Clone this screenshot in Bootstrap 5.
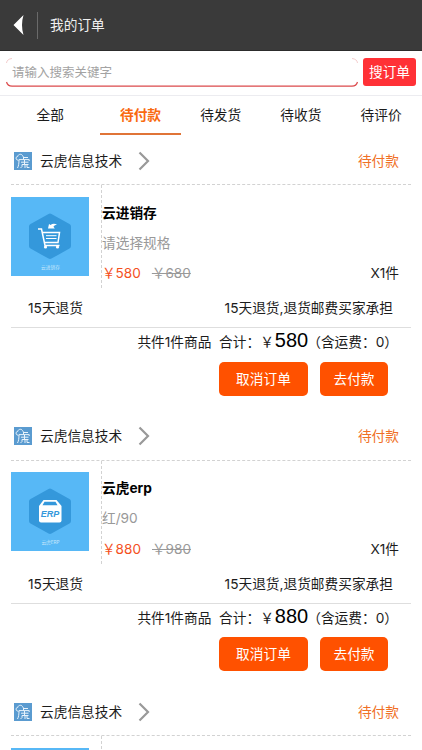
<!DOCTYPE html>
<html lang="zh-CN">
<head>
<meta charset="utf-8">
<meta name="viewport" content="width=device-width, initial-scale=1">
<title>我的订单</title>
<link href="https://cdn.jsdelivr.net/npm/bootstrap@5.3.0/dist/css/bootstrap.min.css" rel="stylesheet">
<style>
body{font-family:Inter,"Noto Sans CJK SC",sans-serif;font-size:13.7px;line-height:20px;color:#1c1c1c;background:#fff;height:750px;overflow:hidden}
svg{display:block;flex:none}
.topbar{height:51px;background:#3a3a3a;border-bottom:1px solid #2c2c2c;color:#f0f0f0;padding-left:13px}
.topbar .divider{width:1px;height:27px;background:#6a6a6a;margin:0 12px 0 13px}
.searchbar{height:45px;padding:7px 6px 8px;border-bottom:1px solid #ececf0}
.search-box{width:352px;height:29px}
.search-input{width:100%;height:29px;font-size:12.5px;padding:0 6px 1px;border:0;background:transparent}
.search-input::placeholder{color:#a3a3a3;opacity:1}
.search-btn{width:53px;height:28px;margin-left:5px;background:#ff3136;color:#fff;border-radius:3px;font-size:13.7px;line-height:29px}
.tabs{height:41px;padding-left:10px}
.tabs a{width:80.2px;height:39px;line-height:39px;color:#1c1c1c;border-bottom:2px solid transparent}
.tabs a:first-child{width:90.4px;padding-right:10px}
.tabs a.active{color:#f96a10;font-weight:700;border-color:#e07437}
.order{height:275.5px;padding:0 11px}
.shop{height:48px;padding:0 12px 0 3px;border-bottom:1px dashed #d2d2d2}
.orange{color:#f07026}
.goods{height:103px}
.goods .pic{width:91px;padding-top:11.6px;border-right:1px dashed #d2d2d2}
.goods .info{padding:17.6px 12px 0 0;gap:10.4px}
.goods .title{color:#000}
.muted{color:#999}
.price{color:#f4511e;font-size:13.6px}
.old{font-size:13.6px;margin-left:11px}
.terms{height:40px;padding:1px 18px 0 17px;border-bottom:1px solid #dedede}
.total{height:28px;padding-right:13px;white-space:pre}
.total .sum{font-family:"Liberation Sans",sans-serif;font-size:20px;line-height:25px;color:#000;margin-left:1px}
.total .fee{margin-left:-1px}
.order-btn{height:34px;line-height:34px;font-size:13.7px;background:#ff5100;color:#fff;border-radius:5px}
.cancel{width:89px}.pay{width:68px}
.buttons{gap:12px;padding:5.600px 23px 0 0}
</style>
<script src="https://cdn.jsdelivr.net/npm/bootstrap@5.3.0/dist/js/bootstrap.bundle.min.js"></script>
</head>
<body>
<svg width="0" height="0" class="position-absolute">
  <symbol id="logo" viewBox="0 0 18 18">
    <path fill="#5a9bd0" d="M0 0h18v18H0z"/>
    <g fill="none" stroke="#e8f3fb" stroke-width="1"><path d="M4.500 8.300C1.500 8.300 1.300 4.500 3.700 4.500 4.200 1.500 8.500 1.600 8.800 4.500M3.500 16c1.200-2 1.500-5 1.500-8.400H15.200V9M9.500 4.500V7.500M9.500 5.500H14M7 10.200H14.500M8 12.500H14.500M10.500 8V12.500M8 12.500V14.500L6.500 16M11 12.500V16M13 12.500V15.500H15.500"/></g>
  </symbol>
  <symbol id="chev" viewBox="0 0 12 20"><path d="M1.500 1.500 10 10 1.500 18.500" fill="none" stroke="#999" stroke-width="2.200"/></symbol>
  <symbol id="hex" viewBox="0 0 78 79">
    <path fill="#57b8f6" d="M0 0h78v79H0z"/>
    <path fill="#3498db" stroke="#3498db" stroke-width="6" stroke-linejoin="round" d="M39 19.500 57 29.500V49L39 59 21 49V29.500z"/>
  </symbol>
</svg>

<header class="topbar d-flex align-items-center">
  <svg width="11" height="20" viewBox="0 0 11 20"><path fill="#fff" d="M10.500 0 .5 10l10 10C8.500 13 8.500 7 10.500 0z"/></svg>
  <span class="divider"></span><span class="heading">我的订单</span>
</header>
<form class="searchbar d-flex">
  <div class="search-box position-relative">
    <svg class="position-absolute top-0 start-0" width="352" height="29" viewBox="0 0 352 29" fill="none"><path stroke="#f3cccc" d="M.5 5Q1 1 6 .5M346 .5q5 .5 5.500 4.500"/><path stroke="#dc4a4c" stroke-width="1.200" d="M.5 24Q1.500 28 6 28.200H346q4.500-.2 5.500-4.200"/></svg>
    <input class="search-input position-relative" type="text" placeholder="请输入搜索关键字">
  </div>
  <button type="button" class="search-btn btn p-0 border-0">搜订单</button>
</form>
<nav class="tabs d-flex text-center">
  <a class="text-decoration-none" href="#">全部</a>
  <a class="text-decoration-none active" href="#">待付款</a>
  <a class="text-decoration-none" href="#">待发货</a>
  <a class="text-decoration-none" href="#">待收货</a>
  <a class="text-decoration-none" href="#">待评价</a>
</nav>

<main>
  <section class="order">
    <div class="shop d-flex align-items-center">
      <svg width="18" height="18"><use href="#logo"/></svg><span class="ms-2">云虎信息技术</span>
      <svg class="ms-3" width="12" height="20"><use href="#chev"/></svg><span class="orange ms-auto">待付款</span>
    </div>
    <div class="goods d-flex">
      <div class="pic">
        <svg width="78" height="79" viewBox="0 0 78 79"><use href="#hex"/>
          <g fill="none" stroke="#fff" stroke-width="1.500"><path d="M27 32h3.500l3.500 16.500h14.500M31.500 35.500H48.500L47 45.500H33.500"/><path stroke-width="1" d="M35 38.700H45.500M35 41.500H45.500"/></g>
          <g fill="#fff"><circle cx="34.500" cy="50" r="1.600"/><circle cx="46.500" cy="50" r="1.600"/><path d="M37 31.500l1-4.500 1.500 1c2-1.600 4.500-1.600 6.500-.3-2 .3-3 1-3.500 2.100l1.300 1.700z"/></g>
          <text x="39.500" y="72" text-anchor="middle" font-size="4.700" fill="#c5e6fb">云进销存</text>
        </svg>
      </div>
      <div class="info flex-grow-1 d-flex flex-column">
        <strong class="title fw-bold">云进销存</strong>
        <span class="muted">请选择规格</span>
        <div class="d-flex"><span class="price">￥580</span><span class="old muted text-decoration-line-through">￥680</span><span class="ms-auto">X1件</span></div>
      </div>
    </div>
    <div class="terms d-flex justify-content-between align-items-center"><span>15天退货</span><span>15天退货,退货邮费买家承担</span></div>
    <div class="total d-flex justify-content-end align-items-baseline"><span>共件1件商品  合计：￥</span><span class="sum">580</span><span class="fee">（含运费：0）</span></div>
    <div class="d-flex justify-content-end buttons"><button class="order-btn cancel btn p-0 border-0">取消订单</button><button class="order-btn pay btn p-0 border-0">去付款</button></div>
  </section>

  <section class="order">
    <div class="shop d-flex align-items-center">
      <svg width="18" height="18"><use href="#logo"/></svg><span class="ms-2">云虎信息技术</span>
      <svg class="ms-3" width="12" height="20"><use href="#chev"/></svg><span class="orange ms-auto">待付款</span>
    </div>
    <div class="goods d-flex">
      <div class="pic">
        <svg width="78" height="79" viewBox="0 0 78 79"><use href="#hex"/>
          <path fill="#fff" d="M32.500 28H45.500L50.500 34V48.500q0 2-2 2H30q-2 0-2-2V34z"/><path fill="#3498db" d="M33.500 29.800h11l2 3.500h-15z"/>
          <text x="39" y="45" text-anchor="middle" font-family="Liberation Sans" font-size="9" font-weight="700" font-style="italic" fill="#3498db">ERP</text>
          <text x="39.500" y="72" text-anchor="middle" font-size="4.700" fill="#c5e6fb">云虎ERP</text>
        </svg>
      </div>
      <div class="info flex-grow-1 d-flex flex-column">
        <strong class="title fw-bold">云虎erp</strong>
        <span class="muted">红/90</span>
        <div class="d-flex"><span class="price">￥880</span><span class="old muted text-decoration-line-through">￥980</span><span class="ms-auto">X1件</span></div>
      </div>
    </div>
    <div class="terms d-flex justify-content-between align-items-center"><span>15天退货</span><span>15天退货,退货邮费买家承担</span></div>
    <div class="total d-flex justify-content-end align-items-baseline"><span>共件1件商品  合计：￥</span><span class="sum">880</span><span class="fee">（含运费：0）</span></div>
    <div class="d-flex justify-content-end buttons"><button class="order-btn cancel btn p-0 border-0">取消订单</button><button class="order-btn pay btn p-0 border-0">去付款</button></div>
  </section>

  <section class="order">
    <div class="shop d-flex align-items-center">
      <svg width="18" height="18"><use href="#logo"/></svg><span class="ms-2">云虎信息技术</span>
      <svg class="ms-3" width="12" height="20"><use href="#chev"/></svg><span class="orange ms-auto">待付款</span>
    </div>
    <div class="goods d-flex">
      <div class="pic"><svg width="78" height="79"><use href="#hex"/></svg></div>
    </div>
  </section>
</main>
</body>
</html>
